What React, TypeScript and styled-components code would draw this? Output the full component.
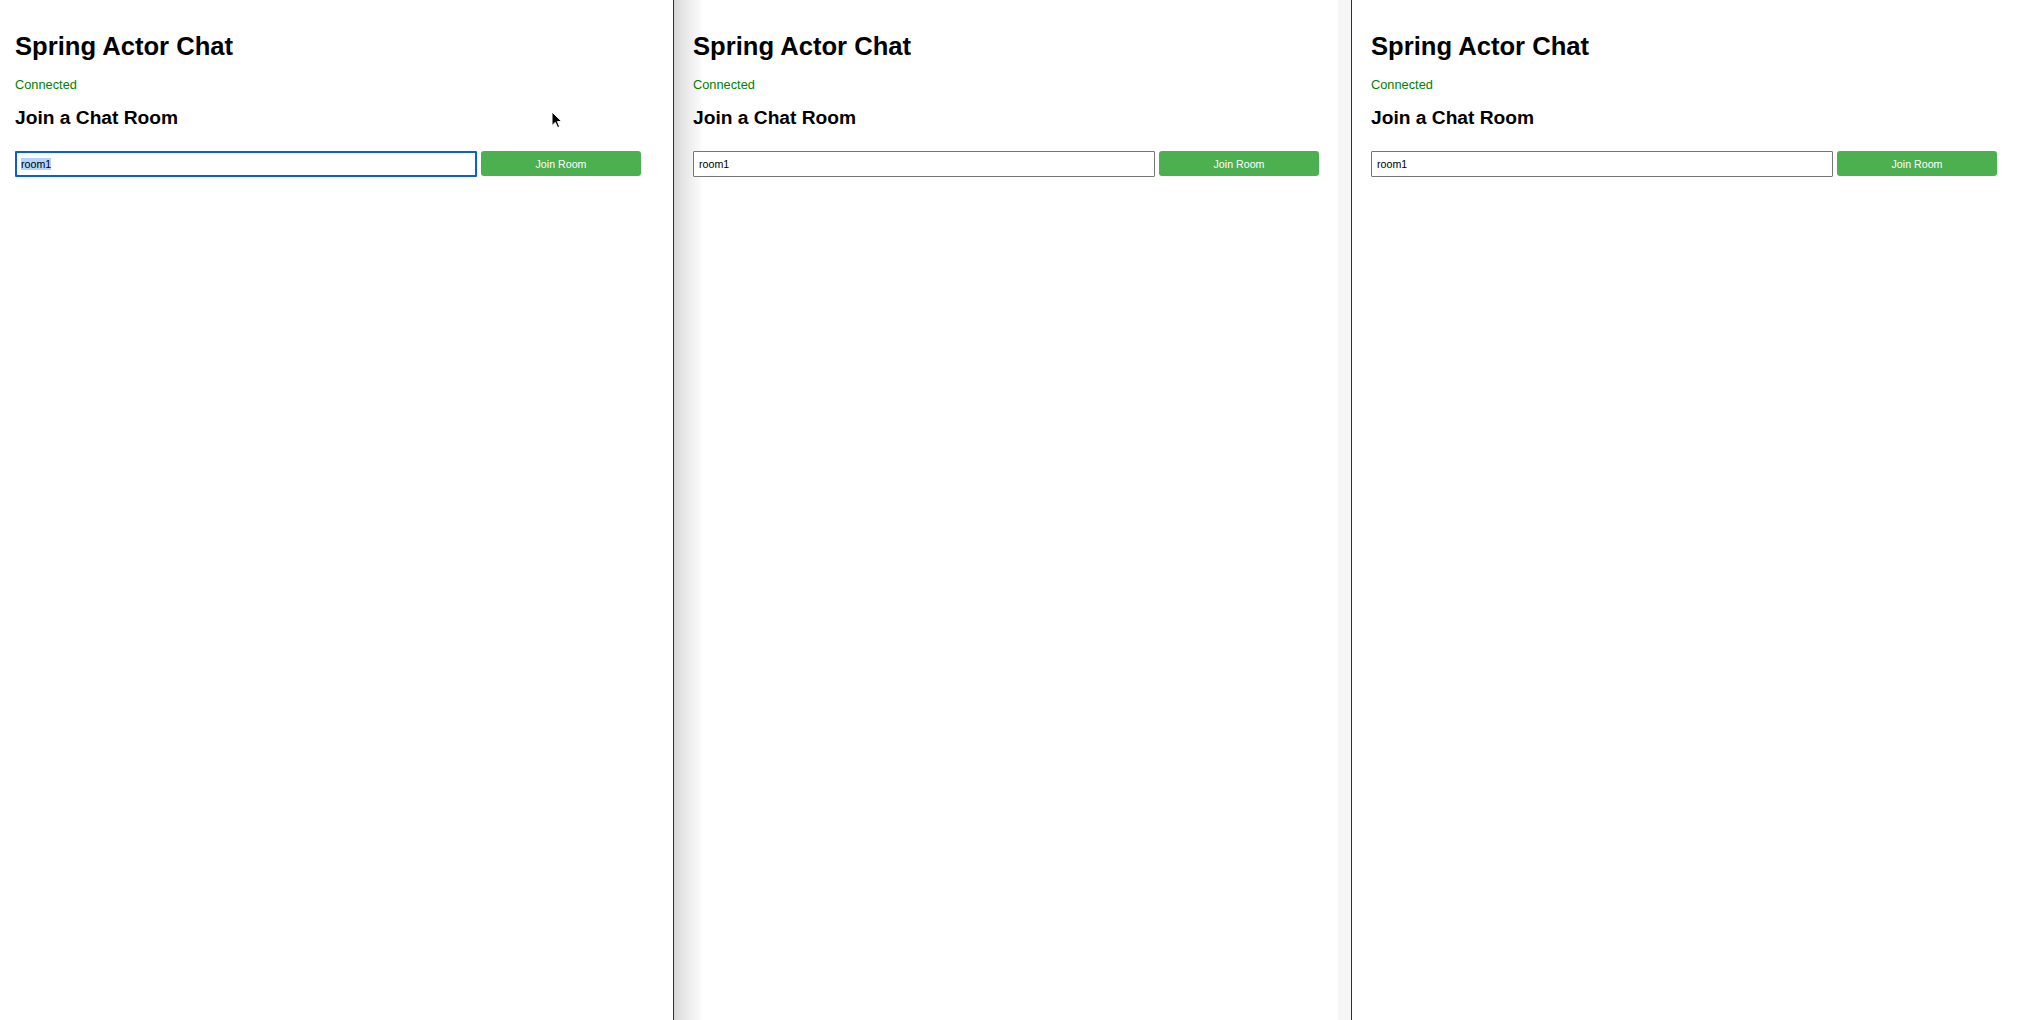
import React, { useEffect, useRef } from 'react';
import styled, { createGlobalStyle } from 'styled-components';

const GlobalStyle = createGlobalStyle`
    html, body {
        margin: 0;
        padding: 0;
        background: #fff;
    }

    body {
        font-family: "Liberation Sans", Arial, Helvetica, sans-serif;
        color: #000;
    }
`;

const Desktop = styled.div`
    display: flex;
    flex-direction: row;
    width: 2024px;
    height: 1020px;
    overflow: hidden;
    position: relative;
`;

const Window = styled.div<{ $width: number; $inset: number; $shadow?: boolean; $edge?: boolean }>`
    position: relative;
    flex: 0 0 ${p => p.$width}px;
    height: 100%;
    box-sizing: border-box;
    padding: 31.5px 0 0 ${p => p.$inset}px;
    background: ${p => p.$shadow
        ? 'linear-gradient(to right, #d6d6d6 0px, #e4e4e4 8px, #eeeeee 16px, #f7f7f7 24px, #ffffff 29px)'
        : '#fff'};
    border-left: ${p => (p.$edge ? '1px solid #2e2e2e' : 'none')};
`;

const RightStrip = styled.div`
    position: absolute;
    top: 0;
    right: 0;
    bottom: 0;
    width: 13px;
    background: #f6f6f6;
`;

const Content = styled.div`
    position: relative;
    width: 626px;
`;

const Title = styled.h1`
    margin: 0;
    font-size: 25.6px;
    line-height: 29.4px;
    font-weight: bold;
`;

const Status = styled.p`
    margin: 16.7px 0 0;
    font-size: 12.8px;
    line-height: 14.7px;
    color: #008000;
`;

const SubTitle = styled.h2`
    margin: 15px 0 0;
    font-size: 19.2px;
    line-height: 22px;
    font-weight: bold;
`;

const JoinRow = styled.div`
    display: flex;
    flex-direction: row;
    align-items: center;
    gap: 4px;
    margin-top: 21.5px;
    height: 26px;
`;

const RoomInput = styled.input<{ $focused?: boolean }>`
    flex: 1 1 auto;
    min-width: 0;
    box-sizing: border-box;
    height: 26px;
    margin: 0;
    padding: 0 ${p => (p.$focused ? '4px' : '5px')};
    font-family: "Liberation Sans", Arial, sans-serif;
    font-size: 10.67px;
    color: #000;
    background: #fff;
    border: ${p => (p.$focused ? '2px solid #0b5fcf' : '1px solid #767676')};
    border-radius: 1px;
    outline: none;

    &::selection {
        background: #b3d4fc;
        color: #000;
    }
`;

const JoinButton = styled.button`
    flex: 0 0 160px;
    box-sizing: border-box;
    height: 25px;
    margin: 0;
    padding: 0;
    font-family: "Liberation Sans", Arial, sans-serif;
    font-size: 10.67px;
    color: #fff;
    background: #4caf50;
    border: none;
    border-radius: 3px;
    cursor: pointer;
`;

const Pointer = styled.svg`
    position: absolute;
    left: 551px;
    top: 111px;
    width: 12px;
    height: 18px;
    pointer-events: none;
`;

const Cursor = () => (
    <Pointer viewBox="0 0 12 18">
        <path d="M1 1 L1 14.5 L4.3 11.4 L6.6 16.6 L8.6 15.7 L6.4 10.6 L10.8 10.6 Z" fill="#000" stroke="#fff" strokeWidth="1" strokeLinejoin="round" />
    </Pointer>
);

function ChatClient({ focused }: { focused?: boolean }) {
    const ref = useRef<HTMLInputElement>(null);

    useEffect(() => {
        if (focused && ref.current) {
            ref.current.focus();
            ref.current.select();
        }
    }, [focused]);

    return (
        <Content>
            <Title>Spring Actor Chat</Title>
            <Status>Connected</Status>
            <SubTitle>Join a Chat Room</SubTitle>
            <JoinRow>
                <RoomInput ref={ref} $focused={focused} type="text" defaultValue="room1" />
                <JoinButton>Join Room</JoinButton>
            </JoinRow>
        </Content>
    );
}

export default function App() {
    return (
        <>
            <GlobalStyle />
            <Desktop>
                <Window $width={673} $inset={15}>
                    <ChatClient focused />
                </Window>
                <Window $width={678} $inset={19} $shadow $edge>
                    <ChatClient />
                    <RightStrip />
                </Window>
                <Window $width={673} $inset={19} $edge>
                    <ChatClient />
                </Window>
                <Cursor />
            </Desktop>
        </>
    );
}
